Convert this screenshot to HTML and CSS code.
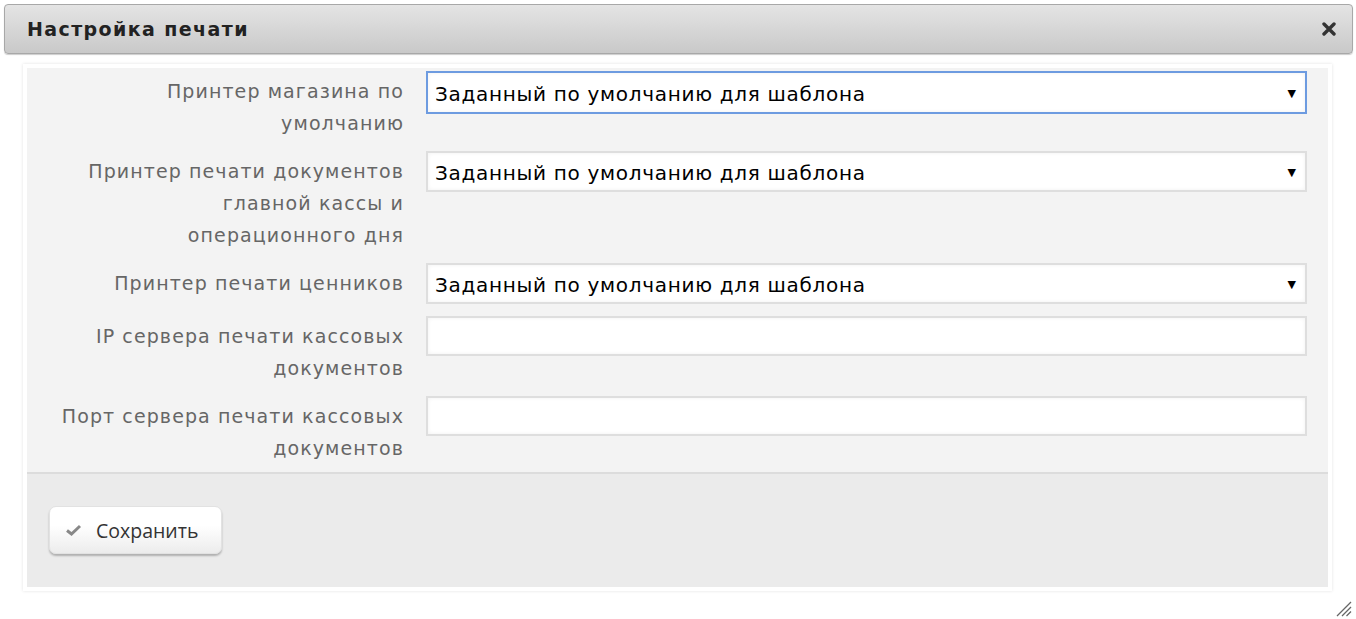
FILE: index.html
```html
<!DOCTYPE html>
<html lang="ru">
<head>
    <meta charset="UTF-8">
    <title>Настройка печати</title>
    <link rel="stylesheet" href="styles.css">
</head>
<body>
    <div class="dialog">
        <div class="dialog-title">
            <span class="title-text">Настройка печати</span>
            <button class="close-btn" title="Закрыть">
                <svg width="14" height="14" viewBox="0 0 14 14">
                    <path d="M2 2 L12 12 M12 2 L2 12" stroke="#333" stroke-width="3.4" stroke-linecap="round"/>
                </svg>
            </button>
        </div>

        <div class="dialog-body">
            <div class="panel">
                <form class="settings-form">
                    <div class="form-row">
                        <label class="form-label">Принтер магазина по умолчанию</label>
                        <div class="select-wrap focused">
                            <select class="form-select">
                                <option>Заданный по умолчанию для шаблона</option>
                            </select>
                            <span class="select-arrow">▼</span>
                        </div>
                    </div>
                    <div class="form-row">
                        <label class="form-label">Принтер печати документов главной кассы и операционного дня</label>
                        <div class="select-wrap">
                            <select class="form-select">
                                <option>Заданный по умолчанию для шаблона</option>
                            </select>
                            <span class="select-arrow">▼</span>
                        </div>
                    </div>
                    <div class="form-row">
                        <label class="form-label">Принтер печати ценников</label>
                        <div class="select-wrap">
                            <select class="form-select">
                                <option>Заданный по умолчанию для шаблона</option>
                            </select>
                            <span class="select-arrow">▼</span>
                        </div>
                    </div>
                    <div class="form-row">
                        <label class="form-label">IP сервера печати кассовых документов</label>
                        <input class="form-input" type="text">
                    </div>
                    <div class="form-row">
                        <label class="form-label">Порт сервера печати кассовых документов</label>
                        <input class="form-input" type="text">
                    </div>
                </form>
                <div class="form-footer">
                    <button class="save-btn">
                        <svg class="check-icon" width="17" height="12" viewBox="0 0 17 12">
                            <path d="M2 6.5 L6.5 10 L15 2" fill="none" stroke="#888" stroke-width="3"/>
                        </svg>
                        Сохранить
                    </button>
                </div>
            </div>
        </div>

        <svg class="resize-grip" width="18" height="18" viewBox="0 0 18 18">
            <path d="M17 3 L3 17 M17 8 L8 17 M17 12.5 L12.5 17" stroke="#666" stroke-width="1.3"/>
        </svg>
    </div>
</body>
</html>
```

FILE: styles.css
```css
* {
    margin: 0;
    padding: 0;
    box-sizing: border-box;
}

body {
    background-color: #fff;
    font-family: "DejaVu Sans", Verdana, sans-serif;
    padding: 4px 3px 0 4px;
}

.dialog {
    position: relative;
    height: 613px;
}

.dialog-title {
    height: 50px;
    display: flex;
    align-items: center;
    justify-content: space-between;
    padding: 0 16px 0 22px;
    border: 1px solid #a8a8a8;
    border-radius: 4px;
    background: linear-gradient(to bottom, #e4e4e4, #c9c9c9);
    box-shadow: 0 1px 1px rgba(0, 0, 0, 0.2);
}

.title-text {
    font-size: 19px;
    font-weight: bold;
    color: #222;
    letter-spacing: 1.4px;
}

.close-btn {
    background: none;
    border: none;
    display: flex;
    cursor: pointer;
}

.dialog-body {
    padding: 10px 21px 0 19px;
}

.panel {
    background-color: #fff;
    padding: 4px;
    box-shadow: 0 0 3px rgba(0, 0, 0, 0.12);
}

.settings-form {
    background-color: #f3f3f3;
    padding: 3px 21px 8px 0;
    display: flex;
    flex-direction: column;
    gap: 12px;
}

.form-row {
    display: flex;
    align-items: flex-start;
    gap: 22px;
}

.form-label {
    width: 377px;
    flex-shrink: 0;
    text-align: right;
    font-size: 19px;
    line-height: 32px;
    padding: 4px 0 0 27px;
    color: #666;
    letter-spacing: 1.1px;
}

.select-wrap {
    position: relative;
    flex: 1;
    height: 41px;
    border: 2px solid #dedede;
    background-color: #fff;
    box-shadow: inset 0 0 4px rgba(0, 0, 0, 0.06);
}

.select-wrap.focused {
    height: 43px;
    border-color: #6d9be0;
}

.form-select {
    appearance: none;
    -webkit-appearance: none;
    width: 100%;
    height: 100%;
    border: none;
    outline: none;
    background: transparent;
    font-family: "DejaVu Sans", Verdana, sans-serif;
    font-size: 20px;
    color: #000;
    padding: 3px 0 0 7px;
    letter-spacing: 0.7px;
}

.select-arrow {
    position: absolute;
    right: 9px;
    top: 50%;
    transform: translateY(-50%);
    font-size: 11px;
    color: #000;
    pointer-events: none;
}

.form-input {
    flex: 1;
    height: 40px;
    border: 2px solid #dedede;
    background-color: #fff;
    box-shadow: inset 0 0 4px rgba(0, 0, 0, 0.06);
    outline: none;
}

.form-footer {
    background-color: #ebebeb;
    border-top: 2px solid #dcdcdc;
    height: 115px;
    padding: 32px 0 0 22px;
}

.save-btn {
    display: inline-flex;
    align-items: center;
    gap: 14px;
    height: 48px;
    padding: 0 23px 0 15px;
    border: 1px solid #e2e2e2;
    border-radius: 7px;
    background: linear-gradient(to bottom, #fff 40%, #ececec);
    box-shadow: 0 2px 2px rgba(0, 0, 0, 0.25);
    font-family: "Open Sans", sans-serif;
    font-size: 19.5px;
    color: #333;
    cursor: pointer;
}

.resize-grip {
    position: absolute;
    right: 1px;
    bottom: 0;
}
```
